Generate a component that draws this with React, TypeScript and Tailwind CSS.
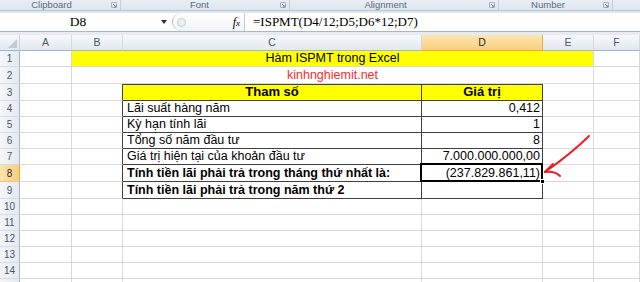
import React from 'react';

const GRID = 'border-[#d9d9d9]';
const TB = 'border-[#404040]';

const cols = ['A', 'B', 'C', 'D', 'E', 'F'];

function Cell({ className = '', children }: { className?: string; children?: React.ReactNode }) {
  return (
    <div className={`flex items-end overflow-visible whitespace-nowrap border-r border-b pb-[1px] leading-[14px] ${className}`}>
      {children}
    </div>
  );
}

function RowHead({ n, active }: { n?: number; active?: boolean }) {
  return (
    <div
      className={`flex items-center justify-center border-r border-b text-[10px] ${
        active
          ? 'border-r-[#f2a93b] border-b-[#f2c46b] bg-gradient-to-r from-[#fbe3ae] to-[#f7cf7f] text-[#2b2b2b]'
          : 'border-r-[#9eb6ce] border-b-[#d5dbe3] bg-gradient-to-r from-[#f4f6f9] to-[#e4e9f0] text-[#4d5766]'
      }`}
    >
      {n}
    </div>
  );
}

function Launcher() {
  return (
    <svg width="6" height="6" viewBox="0 0 6 6" className="shrink-0">
      <path d="M0.5 0.5h5v5h-5z" fill="none" stroke="#a9b4c2" />
      <path d="M2 2l3 3M5 3v2h-2" fill="none" stroke="#7d8a9a" />
    </svg>
  );
}

export default function App() {
  return (
    <div className="relative h-[282px] w-[640px] overflow-hidden bg-white" style={{ fontFamily: '"Liberation Sans", Arial, sans-serif' }}>
      {/* ribbon group labels */}
      <div className="flex h-[11px] border-b border-[#b9c6d6] bg-gradient-to-b from-[#e9eef4] to-[#dde5ee] text-[9.5px] leading-[10px] text-[#5a6a80]">
        <div className="flex w-[121px] items-center border-r border-[#c3cdd9] pr-[3px]">
          <span className="flex-1 pr-[8px] text-center">Clipboard</span>
          <Launcher />
        </div>
        <div className="flex w-[169px] items-center border-r border-[#c3cdd9] pr-[3px]">
          <span className="flex-1 pr-[2px] text-center">Font</span>
          <Launcher />
        </div>
        <div className="flex w-[209px] items-center border-r border-[#c3cdd9] pr-[3px]">
          <span className="flex-1 pr-[8px] text-center">Alignment</span>
          <Launcher />
        </div>
        <div className="flex w-[114px] items-center border-r border-[#c3cdd9] pr-[3px]">
          <span className="flex-1 pr-[6px] text-center">Number</span>
          <Launcher />
        </div>
        <div className="flex-1" />
      </div>
      <div className="h-[2px] bg-[#dfe6ef]" />

      {/* formula bar */}
      <div className="flex h-[19px] border-b border-[#a9b6c6] bg-white">
        <div className="flex w-[172px] items-center">
          <span className="w-[156px] text-center text-[13.5px] text-black" style={{ fontFamily: '"Liberation Serif", serif' }}>
            D8
          </span>
          <svg width="6" height="4" viewBox="0 0 6 4" className="ml-[5px]">
            <path d="M0 0h6L3 4z" fill="#333" />
          </svg>
        </div>
        <div className="flex w-[72px] items-center rounded-l-full border-l border-[#b8c0ca] bg-gradient-to-b from-white to-[#f1f3f6] pl-[4px] pr-[4px]">
          <div className="h-[9px] w-[9px] rounded-full border border-[#c4cad2] bg-[#eceff3]" />
          <span className="ml-auto text-[12px] italic text-black" style={{ fontFamily: '"Liberation Serif", serif' }}>
            f<span className="text-[9px]">x</span>
          </span>
        </div>
        <div className="flex flex-1 items-center border-l border-[#c5ccd5] pl-[8px] text-[13px] text-black" style={{ fontFamily: '"Liberation Serif", serif' }}>
          =ISPMT(D4/12;D5;D6*12;D7)
        </div>
      </div>
      <div className="h-[3px] bg-[#e6ebf1]" />

      {/* sheet */}
      <div className="grid grid-cols-[20px_52px_51px_299px_121px_51px_46px] grid-rows-[16px_16px_17px_17px_16px_16px_16px_16px_17px_17px_16px_16px_16px_16px_16px_20px] text-[12.5px] text-black">
        {/* column headers */}
        <div className="flex items-end justify-end border-r border-b border-r-[#c9d2dd] border-b-[#9eb6ce] bg-gradient-to-b from-[#f6f8fb] to-[#e3e8ef] p-[2px]">
          <svg width="9" height="9" viewBox="0 0 9 9">
            <path d="M9 0V9H0z" fill="#c3cad3" />
          </svg>
        </div>
        {cols.map((c) => (
          <div
            key={c}
            className={`flex items-center justify-center border-r border-b text-[10.5px] ${
              c === 'D'
                ? 'border-r-[#f2a93b] border-b-[#f2a93b] bg-gradient-to-b from-[#fde6b2] to-[#f8cf7c] text-[#2b2b2b]'
                : 'border-r-[#d1d9e3] border-b-[#9eb6ce] bg-gradient-to-b from-[#f6f8fb] to-[#e3e8ef] text-[#4d5766]'
            }`}
          >
            {c}
          </div>
        ))}

        {/* row 1 */}
        <RowHead n={1} />
        <Cell className={GRID} />
        <Cell className={`${GRID} col-span-4 justify-center bg-[#ffff00]`}>Hàm ISPMT trong Excel</Cell>
        <Cell className={GRID} />

        {/* row 2 */}
        <RowHead n={2} />
        <Cell className={GRID} />
        <Cell className={`${GRID} col-span-4 justify-center text-[#ff2a2a]`}>kinhnghiemit.net</Cell>
        <Cell className={GRID} />

        {/* row 3 */}
        <RowHead n={3} />
        <Cell className={GRID} />
        <Cell className={`${GRID} border-r-[#404040]`} />
        <Cell className={`${TB} justify-center bg-[#ffff00] font-bold text-[13px] shadow-[inset_0_1px_0_#404040]`}>Tham số</Cell>
        <Cell className={`${TB} justify-center bg-[#ffff00] font-bold text-[13px] shadow-[inset_0_1px_0_#404040]`}>Giá trị</Cell>
        <Cell className={GRID} />
        <Cell className={GRID} />

        {[
          [4, 'Lãi suất hàng năm', '0,412'],
          [5, 'Kỳ hạn tính lãi', '1'],
          [6, 'Tổng số năm đầu tư', '8'],
          [7, 'Giá trị hiện tại của khoản đầu tư', '7.000.000.000,00'],
        ].map(([n, label, value]) => (
          <React.Fragment key={n}>
            <RowHead n={n as number} />
            <Cell className={GRID} />
            <Cell className={`${GRID} border-r-[#404040]`} />
            <Cell className={`${TB} pl-[4px]`}>{label}</Cell>
            <Cell className={`${TB} justify-end pr-[2px]`}>{value}</Cell>
            <Cell className={GRID} />
            <Cell className={GRID} />
          </React.Fragment>
        ))}

        {/* row 8 */}
        <RowHead n={8} active />
        <Cell className={GRID} />
        <Cell className={`${GRID} border-r-[#404040]`} />
        <Cell className={`${TB} pl-[4px] font-bold`}>Tính tiền lãi phải trả trong tháng thứ nhất là:</Cell>
        <Cell className={`${TB} relative justify-end pr-[2px]`}>
          (237.829.861,11)
          <div className="absolute -top-[2px] -left-[2px] -right-[1px] -bottom-[1px] border-2 border-black" />
          <div className="absolute -right-[3px] -bottom-[3px] h-[5px] w-[5px] border border-white bg-black" />
        </Cell>
        <Cell className={GRID} />
        <Cell className={GRID} />

        {/* row 9 */}
        <RowHead n={9} />
        <Cell className={GRID} />
        <Cell className={`${GRID} border-r-[#404040]`} />
        <Cell className={`${TB} pl-[4px] font-bold`}>Tính tiền lãi phải trả trong năm thứ 2</Cell>
        <Cell className={TB} />
        <Cell className={GRID} />
        <Cell className={GRID} />

        {[10, 11, 12, 13, 14, 0].map((n) => (
          <React.Fragment key={n}>
            <RowHead n={n || undefined} />
            {cols.map((c) => (
              <Cell key={c} className={GRID} />
            ))}
          </React.Fragment>
        ))}
      </div>

      {/* hand-drawn red arrow */}
      <svg className="pointer-events-none absolute left-0 top-0" width="640" height="282" viewBox="0 0 640 282">
        <g fill="none" stroke="#ee1c24" strokeWidth="2" strokeLinecap="round" strokeLinejoin="round">
          <path d="M589 136 C577 148 562 160 545 172" />
          <path d="M545 172 L553 164" />
          <path d="M545 172 C551 171 556 172 560 176" />
        </g>
      </svg>
    </div>
  );
}
